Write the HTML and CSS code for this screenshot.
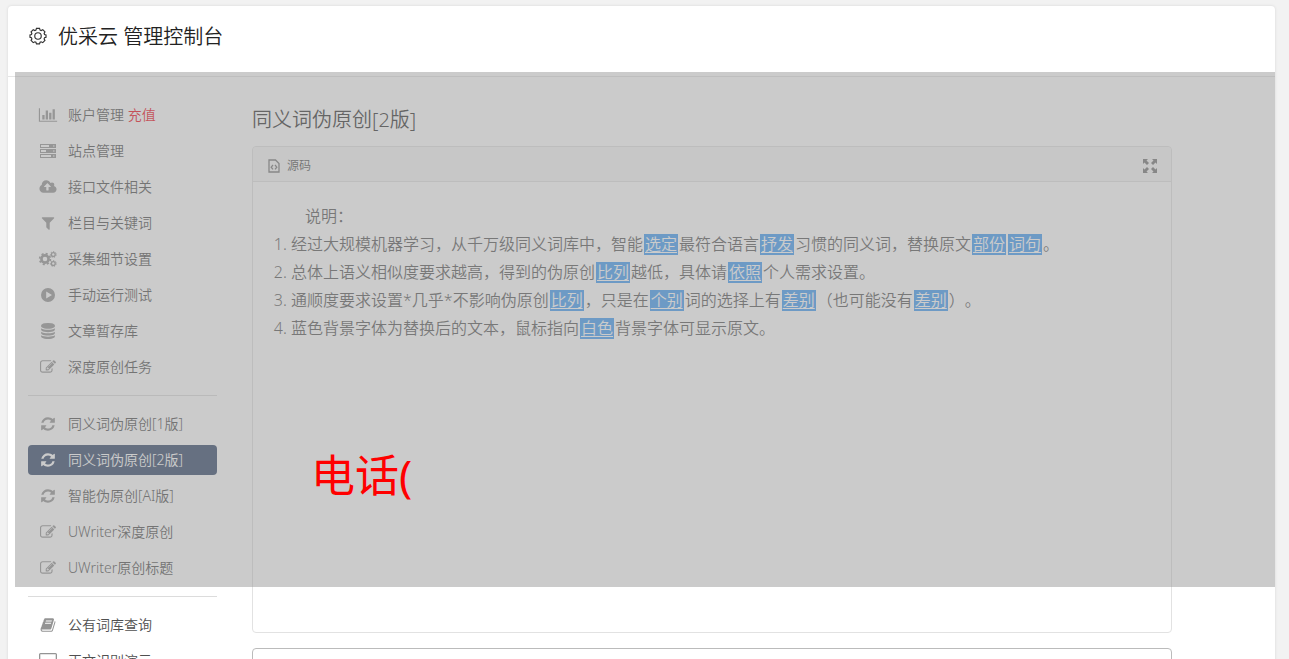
FILE: index.html
```html
<!DOCTYPE html>
<html lang="zh-CN">
<head>
<meta charset="utf-8">
<title>优采云 管理控制台</title>
<link rel="stylesheet" href="styles.css">
</head>
<body>
<svg class="sprite" aria-hidden="true">
  <symbol id="refresh" viewBox="0 0 1792 1792"><path d="M1639 1056q0 5-1 7-64 268-268 434.500t-478 166.500q-146 0-282.500-55t-243.500-157l-129 129q-19 19-45 19t-45-19-19-45v-448q0-26 19-45t45-19h448q26 0 45 19t19 45-19 45l-137 137q71 66 161 102t187 36q134 0 250-65t186-179q11-17 53-117 8-23 30-23h192q13 0 22.500 9.500t9.500 22.500zm25-800v448q0 26-19 45t-45 19h-448q-26 0-45-19t-19-45 19-45l138-138q-148-137-349-137-134 0-250 65t-186 179q-11 17-53 117-8 23-30 23h-199q-13 0-22.500-9.500t-9.500-22.500v-7q65-268 270-434.500t480-166.500q146 0 284 55.500t245 156.500l130-129q19-19 45-19t45 19 19 45z"/></symbol>
  <symbol id="edit" viewBox="0 0 1792 1792"><path d="M888 1184l116-116-152-152-116 116v56h96v96h56zm440-720q-16-16-33 1l-350 350q-17 17-1 33t33-1l350-350q17-17 1-33zm80 594v190q0 119-84.500 203.500t-203.500 84.500h-832q-119 0-203.500-84.500t-84.500-203.500v-832q0-119 84.500-203.500t203.500-84.500h832q63 0 117 25 15 7 18 23 3 17-9 29l-49 49q-14 14-32 8-23-6-45-6h-832q-66 0-113 47t-47 113v832q0 66 47 113t113 47h832q66 0 113-47t47-113v-126q0-13 9-22l64-64q15-15 35-7t20 29zm-96-738l288 288-672 672h-288v-288zm444 132l-92 92-288-288 92-92q28-28 68-28t68 28l152 152q28 28 28 68t-28 68z"/></symbol>
</svg>
<div class="page">
  <header class="topbar">
    <svg class="logo" viewBox="0 0 20 20" aria-hidden="true"><path d="M8.300 1.500h3.400l.6 1.900 1.200.5 1.800-.9 2.400 2.400-.9 1.800.5 1.200 1.600.4v2.600l-1.600.6-.5 1.200.9 1.800-2.400 2.400-1.800-.9-1.200.5-.6 1.700H8.300l-.6-1.700-1.200-.5-1.800.9L2.300 15l.9-1.800-.5-1.200-1.600-.6V8.800l1.600-.4.5-1.200-.9-1.800L4.700 3l1.800.9 1.200-.5z"/><circle cx="10" cy="10" r="3.600"/></svg>
    <h1>优采云 管理控制台</h1>
  </header>
  <div class="content">
    <nav class="sidebar">
      <ul>
        <li><a href="#"><svg viewBox="0 0 2048 1792"><path d="M640 896v512H384V896zM1024 384v1024H768V384zM2048 1536v128H0V128h128v1408zM1408 640v768h-256V640zM1792 256v1152h-256V256z"/></svg><span>账户管理 <em>充值</em></span></a></li>
        <li><a href="#"><svg viewBox="0 0 18 16"><path fill-rule="evenodd" d="M1 1h16v4H1zm1 1v2h8V2zM1 6h16v4H1zm1 1v2h5V7zM1 11h16v4H1zm1 1v2h10v-2zM14 2.500h1.500v1H14zM14 7.500h1.500v1H14zM14 12.500h1.500v1H14z"/></svg>站点管理</a></li>
        <li><a href="#"><svg viewBox="-64 0 1920 1792"><path d="M1216 864q0-14-9-23l-352-352q-9-9-23-9t-23 9l-351 351q-10 12-10 24 0 14 9 23t23 9h224v352q0 13 9.500 22.500t22.500 9.500h192q13 0 22.500-9.500t9.500-22.500v-352h224q13 0 22.500-9.500t9.500-22.500zm640 288q0 159-112.500 271.500t-271.500 112.500h-1088q-185 0-316.500-131.500t-131.500-316.500q0-130 70-240t188-165q-2-30-2-43 0-212 150-362t362-150q156 0 285.500 87t188.500 231q71-62 166-62 106 0 181 75t75 181q0 76-41 138 130 31 213.500 135.500t83.500 238.500z"/></svg>接口文件相关</a></li>
        <li><a href="#"><svg viewBox="0 0 1792 1792"><path d="M1595 295q17 41-14 70l-493 493v742q0 42-39 59-13 5-25 5-27 0-45-19l-256-256q-19-19-19-45v-486l-493-493q-31-29-14-70 17-39 59-39h1280q42 0 59 39z"/></svg>栏目与关键词</a></li>
        <li><a href="#"><svg class="cogs" viewBox="0 0 18 16"><circle cx="6" cy="8" r="3.600" stroke-width="2.600"/><circle cx="6" cy="8" r="5.400" stroke-width="1.600" stroke-dasharray="2.100 2.140"/><circle cx="14.300" cy="3.500" r="1.900" stroke-width="1.300"/><circle cx="14.300" cy="3.500" r="2.900" stroke-width="1" stroke-dasharray="1.300 1.300"/><circle cx="14.300" cy="12.500" r="1.900" stroke-width="1.300"/><circle cx="14.300" cy="12.500" r="2.900" stroke-width="1" stroke-dasharray="1.300 1.300"/></svg>采集细节设置</a></li>
        <li><a href="#"><svg viewBox="0 0 16 16"><path fill-rule="evenodd" d="M8 1a7 7 0 1 1 0 14A7 7 0 0 1 8 1zM6.200 4.600v6.800L12 8z"/></svg>手动运行测试</a></li>
        <li><a href="#"><svg viewBox="0 0 1792 1792"><path d="M896 768q237 0 443-43t325-127v170q0 69-103 128t-280 93.500-385 34.500-385-34.500-280-93.500-103-128v-170q119 84 325 127t443 43zm0 768q237 0 443-43t325-127v170q0 69-103 128t-280 93.500-385 34.500-385-34.500-280-93.500-103-128v-170q119 84 325 127t443 43zm0-384q237 0 443-43t325-127v170q0 69-103 128t-280 93.500-385 34.500-385-34.500-280-93.500-103-128v-170q119 84 325 127t443 43zm0-1152q208 0 385 34.500t280 93.500 103 128v128q0 69-103 128t-280 93.500-385 34.500-385-34.500-280-93.500-103-128v-128q0-69 103-128t280-93.500 385-34.500z"/></svg>文章暂存库</a></li>
        <li><a href="#"><svg><use href="#edit"/></svg>深度原创任务</a></li>
      </ul>
      <hr>
      <ul>
        <li><a href="#"><svg><use href="#refresh"/></svg>同义词伪原创[1版]</a></li>
        <li><a href="#" class="active" aria-current="page"><svg><use href="#refresh"/></svg>同义词伪原创[2版]</a></li>
        <li><a href="#"><svg><use href="#refresh"/></svg>智能伪原创[AI版]</a></li>
        <li><a href="#"><svg><use href="#edit"/></svg>UWriter深度原创</a></li>
        <li><a href="#"><svg><use href="#edit"/></svg>UWriter原创标题</a></li>
      </ul>
      <hr>
      <ul>
        <li><a href="#"><svg viewBox="0 0 1792 1792"><path d="M1703 478q40 57 18 129l-275 906q-19 64-76.500 107.500t-122.500 43.500h-923q-77 0-148.500-53.500t-99.500-131.500q-24-67-2-127 0-4 3-27t4-37q1-8-3-21.500t-3-19.500q2-11 8-21t16.500-23.500 16.500-23.500q23-38 45-91.500t30-91.500q3-10 .5-30t-.5-28q3-11 17-28t17-23q21-36 42-92t25-90q1-9-2.500-32t.5-28q4-13 22-30.500t22-22.500q19-26 42.500-84.500t27.500-96.500q1-8-3-25.500t-2-26.500q2-8 9-18t18-23 17-21q8-12 16.500-30.500t15-35 16-36 19.500-32 26.500-23.500 36-11.500 47.500 5.500l-1 3q38-9 51-9h761q74 0 114 56t18 130l-274 906q-36 119-71.500 153.500t-128.500 34.500h-869q-27 0-38 15-11 16-1 43 24 70 144 70h923q29 0 56-15.500t35-41.500l300-987q7-22 5-57 38 15 59 43zm-1064 2q-4 13 2 22.500t20 9.500h608q13 0 25.500-9.500t16.500-22.500l21-64q4-13-2-22.500t-20-9.500h-608q-13 0-25.500 9.500t-16.500 22.500zm-83 256q-4 13 2 22.500t20 9.500h608q13 0 25.500-9.500t16.500-22.500l21-64q4-13-2-22.500t-20-9.500h-608q-13 0-25.500 9.500t-16.500 22.500z"/></svg>公有词库查询</a></li>
        <li><a href="#"><svg viewBox="0 0 18 16"><path fill-rule="evenodd" d="M1.500 0h15Q18 0 18 1.500v9q0 1.500-1.500 1.500H11v2h2v2H5v-2h2v-2H1.500Q0 12 0 10.500v-9Q0 0 1.500 0zM1.300 1.300v8.500h15.400V1.300z"/></svg>正文识别演示</a></li>
      </ul>
    </nav>
    <main>
      <h2>同义词伪原创[2版]</h2>
      <section class="editor">
        <div class="toolbar">
          <button type="button"><svg viewBox="0 0 12 14" aria-hidden="true"><path d="M1 1h6.500L11 4.500V13H1zM5 6L3.200 8.200 5 10.400M7 6l1.800 2.200L7 10.400" fill="none" stroke="currentColor" stroke-width="1.300"/></svg>源码</button>
          <button type="button" aria-label="全屏"><svg class="expand" viewBox="0 0 14 14" aria-hidden="true"><path d="M0 0h5L3.500 1.500 6 4 4 6 1.500 3.500 0 5zM14 0v5l-1.500-1.500L10 6 8 4l2.500-2.500L9 0zM0 14V9l1.500 1.500L4 8l2 2-2.500 2.500L5 14zM14 14H9l1.500-1.500L8 10l2-2 2.500 2.500L14 9z"/></svg></button>
        </div>
        <div class="document">
          <p>说明：</p>
          <ol>
            <li>经过大规模机器学习，从千万级同义词库中，智能<a href="#">选定</a>最符合语言<a href="#">抒发</a>习惯的同义词，替换原文<a href="#">部份</a><a href="#">词句</a>。</li>
            <li>总体上语义相似度要求越高，得到的伪原创<a href="#">比列</a>越低，具体请<a href="#">依照</a>个人需求设置。</li>
            <li>通顺度要求设置*几乎*不影响伪原创<a href="#">比列</a>，只是在<a href="#">个别</a>词的选择上有<a href="#">差别</a>（也可能没有<a href="#">差别</a>）。</li>
            <li>蓝色背景字体为替换后的文本，鼠标指向<a href="#">白色</a>背景字体可显示原文。</li>
          </ol>
        </div>
      </section>
      <textarea aria-label="原文"></textarea>
    </main>
  </div>
  <div class="overlay"><p>电话(</p></div>
</div>
</body>
</html>
```

FILE: styles.css
```css
* { box-sizing: border-box; }

body {
  margin: 0;
  padding: 6px 14px 0 8px;
  background: #f2f2f2;
  color: #505050;
  font: 350 14px/30px "Noto Sans", "Noto Sans CJK SC", sans-serif;
  text-spacing-trim: space-all;
}

h1, h2, p, ol, ul { margin: 0; padding: 0; font-weight: 350; }
ul { list-style: none; }
a { color: inherit; text-decoration: none; }
button { padding: 0; border: 0; background: none; color: inherit; font: inherit; }
.sprite { display: none; }

.page {
  position: relative;
  background: #fff;
  border-radius: 4px;
  box-shadow: 0 0 2px 1px #e4e4e4;
}

.topbar {
  display: flex;
  align-items: center;
  gap: 10px;
  height: 71px;
  padding: 0 20px 8px;
  border-bottom: 1px solid #e5e5e5;
  color: #222;
}
.topbar h1 { font-size: 20px; }
.logo { width: 20px; height: 20px; padding-bottom: 2px; fill: none; stroke: #333; stroke-width: 1.3; }

.content {
  display: flex;
  gap: 35px;
  padding: 23px 103px 0 20px;
}

.sidebar { flex: none; width: 189px; }
.sidebar li { margin-bottom: 6px; }
.sidebar a {
  display: flex;
  align-items: center;
  gap: 10px;
  padding-left: 10px;
  border-radius: 4px;
}
.sidebar svg { width: 20px; height: 16px; fill: #949494; }
.sidebar .cogs { fill: none; stroke: #949494; }
.sidebar em { color: #f00a18; font-style: normal; }
.sidebar hr { height: 1px; margin: 13px 0; border: 0; background: #dcdcdc; }
.sidebar ul { display: flow-root; }
.sidebar li:last-child { margin-bottom: 0; }
.sidebar .active { background: #35496a; color: #fff; }
.sidebar .active svg { fill: #fff; }

main { flex: 1; min-width: 0; }
h2 { margin: 5px 0 11px; font-size: 20px; color: #333; }

.editor {
  min-height: 487px;
  border: 1px solid #e2e2e2;
  border-radius: 4px;
}
.toolbar {
  display: flex;
  justify-content: space-between;
  align-items: center;
  height: 35px;
  padding: 3px 14px 0 15px;
  border-bottom: 1px solid #e2e2e2;
  border-radius: 4px 4px 0 0;
  background: #f6f6f6;
  font-size: 12px;
}
.toolbar button { display: flex; align-items: center; gap: 7px; }
.toolbar svg { width: 12px; height: 14px; color: #777; fill: #777; }
.toolbar .expand { width: 14px; }

.document {
  padding: 20px;
  color: #595959;
  font-size: 16px;
  line-height: 28px;
}
.document p { text-indent: 2em; }
.document ol { padding-left: 18px; }
.document a {
  margin: 0 1px;
  padding: 0 1px;
  background: linear-gradient(#439df3, #439df3) center / 100% 21px no-repeat;
  color: #fff;
  text-decoration: underline;
  text-underline-offset: 2px;
}

textarea {
  display: block;
  width: 100%;
  height: 120px;
  margin-top: 15px;
  border: 1px solid #bbb;
  border-radius: 4px;
  resize: none;
}

.overlay {
  position: absolute;
  top: 66px;
  left: 7px;
  right: 0;
  height: 515px;
  padding: 370px 0 0 296px;
  background: rgba(151, 151, 151, .5);
  color: #f00;
  font-size: 44px;
  line-height: 66px;
}
.overlay p { font-weight: 400; }
```
